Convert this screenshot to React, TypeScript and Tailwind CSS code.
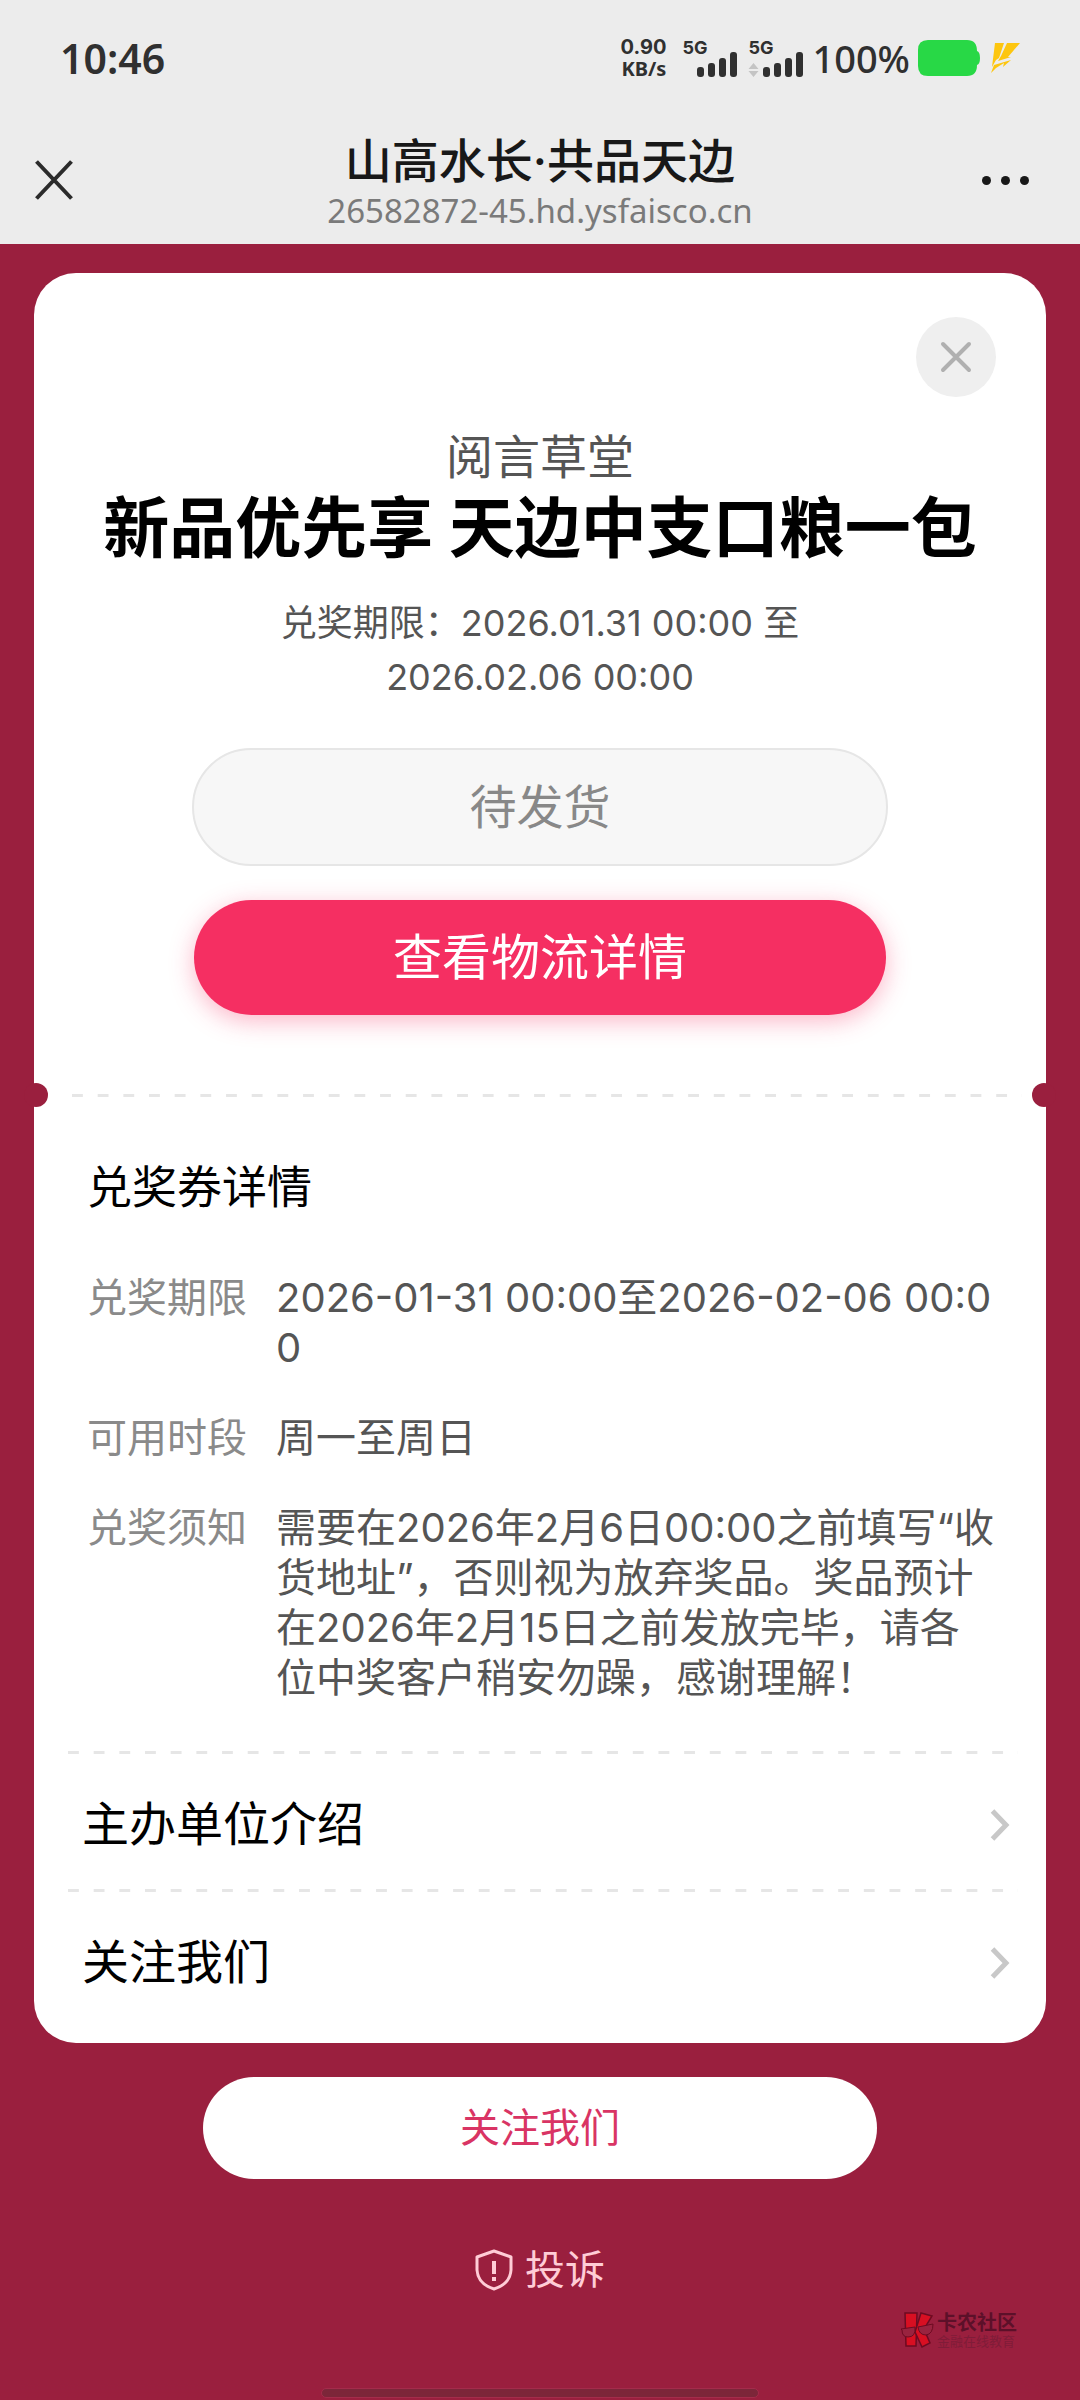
import type { ReactNode } from "react";

const DETAILS = [
  { label: "兑奖期限", value: "2026-01-31 00:00至2026-02-06 00:00" },
  { label: "可用时段", value: "周一至周日" },
  {
    label: "兑奖须知",
    value:
      "需要在2026年2月6日00:00之前填写“收货地址”，否则视为放弃奖品。奖品预计在2026年2月15日之前发放完毕，请各位中奖客户稍安勿躁，感谢理解！",
  },
];

const LINKS = ["主办单位介绍", "关注我们"];

function Signal({ children }: { children?: ReactNode }) {
  return (
    <div className="flex items-end">
      <div className="flex h-[38px] w-6 flex-col justify-between">
        <span className="text-[18px] leading-[18px] font-bold">5G</span>
        {children}
      </div>
      <svg className="-ml-[9px]" width="41" height="38" viewBox="0 0 41 38" fill="#303030" aria-hidden="true">
        <rect x="0" y="28" width="7" height="10" rx="3" />
        <rect x="11" y="24" width="7" height="14" rx="3" />
        <rect x="22" y="19" width="7" height="19" rx="3" />
        <rect x="33" y="13" width="7" height="25" rx="3" />
      </svg>
    </div>
  );
}

function StatusBar() {
  return (
    <div className="flex h-[116px] items-center justify-between px-[60px] text-[#303030]">
      <span className="font-['Noto_Sans'] text-[41px] leading-[50px] font-semibold">10:46</span>
      <div className="flex items-center">
        <div className="mr-4 text-right text-[20px] leading-[22px] font-bold">
          <div>0.90</div>
          <div className="font-['Noto_Sans']">KB/s</div>
        </div>
        <div className="mr-2 flex gap-2.5">
          <Signal />
          <Signal>
            <svg width="11" height="14" viewBox="0 0 11 14" fill="#c4c4c4" aria-hidden="true">
              <path d="M5.5 0 10.5 6H.5ZM5.5 14 10.5 8H.5Z" />
            </svg>
          </Signal>
        </div>
        <span className="mr-[7px] font-['Noto_Sans'] text-[38px] leading-[50px] font-medium">100%</span>
        <svg className="mr-2.5" width="64" height="38" viewBox="0 0 64 38" fill="#28d846" aria-hidden="true">
          <path d="M11 1H50Q60 1 60 12Q63 13 63 19T60 26Q60 37 50 37H11Q1 37 1 27V11Q1 1 11 1Z" />
        </svg>
        <svg width="29" height="30" viewBox="0 0 29 30" fill="#fdc60f" aria-hidden="true">
          <path d="M4 0H13L8 15L5 17L1 24Z" />
          <path d="M16 0H29L17 14H20L7 18L10 13Z" />
          <path d="M20 17 12 24 13 20 5 25 0 30 3 22Z" />
        </svg>
      </div>
    </div>
  );
}

function NavBar() {
  return (
    <div className="flex h-[128px] items-center justify-between px-[35px]">
      <button type="button" aria-label="关闭" className="w-[64px]">
        <svg width="38" height="40" viewBox="0 0 38 40" stroke="#2b2b2b" strokeWidth="4" aria-hidden="true">
          <path d="M1.500 1.500 36.500 38.500M36.500 1.500 1.500 38.500" />
        </svg>
      </button>
      <div className="pt-1 text-center">
        <h1 className="text-[47px] leading-[58px] font-medium text-[#181818]">山高水长·共品天边</h1>
        <p className="font-['Noto_Sans'] text-[33px] leading-[42px] text-[#7a7a7a]">26582872-45.hd.ysfaisco.cn</p>
      </div>
      <button type="button" aria-label="更多" className="flex w-[64px] justify-end gap-[10px] pr-4">
        <span className="size-[9px] shrink-0 rounded-full bg-[#181818]" />
        <span className="size-[9px] shrink-0 rounded-full bg-[#181818]" />
        <span className="size-[9px] shrink-0 rounded-full bg-[#181818]" />
      </button>
    </div>
  );
}

function Dashes() {
  return (
    <div className="h-[3px] bg-[linear-gradient(to_right,#e6e6e6_11px,transparent_11px)] bg-[length:26px_3px] bg-repeat-round" />
  );
}

function Watermark() {
  return (
    <div className="mr-[63px] flex items-center gap-[3px] self-end">
      <svg width="34" height="36" viewBox="0 0 34 36" aria-hidden="true">
        <g fill="#d80f22" stroke="#6d0b22" strokeWidth="1.500">
          <path d="M5 1H17L16 34H6Z" />
          <path d="M21 1 32 4 24 17 30 31 22 35 15 20Z" />
        </g>
        <g fill="#99233f" stroke="#6d0b22" strokeWidth="1">
          <path d="M1 17 15 15Q16 25 8 25 2 25 2 18Z" />
          <path d="M18 15 33 12Q33 22 26 23 19 23 18 15Z" />
        </g>
      </svg>
      <div>
        <div className="text-[20px] leading-[22px] font-bold text-[#5c1029]">卡农社区</div>
        <div className="text-[13px] leading-[14px] text-[#7f1c38]">金融在线教育</div>
      </div>
    </div>
  );
}

export default function App() {
  return (
    <div className="flex min-h-screen flex-col bg-[#9a1f3e] font-[Inter,'Noto_Sans_CJK_SC',sans-serif]">
      <header className="bg-[#ececec]">
        <StatusBar />
        <NavBar />
      </header>

      <main className="flex flex-col items-center px-[34px] pt-[29px]">
        <div className="w-full rounded-[42px] bg-white pt-11 pb-2.5">
          {/* Prize summary */}
          <section className="flex flex-col items-center">
            <button
              type="button"
              aria-label="关闭弹窗"
              className="mr-[50px] flex size-20 items-center justify-center self-end rounded-full bg-[#efefef]"
            >
              <svg width="32" height="32" viewBox="0 0 32 32" stroke="#b0b0b0" strokeWidth="4" strokeLinecap="round" aria-hidden="true">
                <path d="M3 3 29 29M29 3 3 29" />
              </svg>
            </button>
            <p className="mt-[30px] text-[47px] leading-[60px] text-[#555555]">阅言草堂</p>
            <h2 className="text-[66px] leading-[82px] font-bold text-black">新品优先享 天边中支口粮一包</h2>
            <p className="mt-[27px] w-[560px] text-center text-[36px] leading-[54px] text-[#555555]">
              兑奖期限：2026.01.31 00:00 至 2026.02.06 00:00
            </p>
            <button
              type="button"
              disabled
              className="mt-11 h-[118px] w-[696px] max-w-full rounded-full border-2 border-[#e6e6e6] bg-[#f7f7f7] text-[47px] text-[#888888]"
            >
              待发货
            </button>
            <button
              type="button"
              className="mt-[34px] h-[115px] w-[692px] max-w-full rounded-full bg-[#f52f62] text-[49px] text-white shadow-[0_6px_24px_rgba(245,47,98,0.35)]"
            >
              查看物流详情
            </button>
          </section>

          {/* Ticket perforation */}
          <div className="-mx-[10px] mt-[68px] flex items-center">
            <span className="size-6 rounded-full bg-[#9a1f3e]" />
            <div className="mr-[10px] ml-6 grow">
              <Dashes />
            </div>
            <span className="size-6 rounded-full bg-[#9a1f3e]" />
          </div>

          {/* Coupon details */}
          <section className="mt-[51px] pr-12 pl-[53px]">
            <h3 className="text-[45px] leading-[60px] text-black">兑奖券详情</h3>
            <dl className="mt-[55px] flex flex-col gap-10 text-[40px] leading-[50px]">
              {DETAILS.map((d) => (
                <div key={d.label} className="flex gap-[29px]">
                  <dt className="shrink-0 text-[#8a8a8a]">{d.label}</dt>
                  <dd className="break-all text-[#555555]">{d.value}</dd>
                </div>
              ))}
            </dl>
          </section>

          <nav className="mt-12 pr-7 pl-[34px]">
            {LINKS.map((text) => (
              <div key={text}>
                <Dashes />
                <a href="#" className="flex h-[135px] items-center justify-between pt-1.5 pr-2 pl-3.5 text-[47px] text-black">
                  {text}
                  <svg width="20" height="32" viewBox="0 0 20 32" fill="none" stroke="#c8c8c8" strokeWidth="5" aria-hidden="true">
                    <path d="M2.500 2 16 16 2.500 30" />
                  </svg>
                </a>
              </div>
            ))}
            <div className="h-1.5" />
          </nav>
        </div>

        <button
          type="button"
          className="mt-[34px] h-[102px] w-[674px] max-w-full rounded-full bg-white text-[40px] text-[#d93464]"
        >
          关注我们
        </button>

        <a href="#" className="mt-[66px] flex items-center gap-3 text-[40px] leading-[50px] text-[#ffccd6]">
          <svg width="38" height="42" viewBox="0 0 38 42" fill="none" stroke="#ffccd6" strokeWidth="3" strokeLinejoin="round" aria-hidden="true">
            <path d="M19 2 36 8V21Q35 35 19 40 3 35 2 21V8Z" />
            <path d="M19 12V25M19 28V32" strokeWidth="4" />
          </svg>
          投诉
        </a>
      </main>

      <footer className="mt-auto flex flex-col items-center pb-0.5">
        <Watermark />
        <div className="mt-10 h-[10px] w-[438px] rounded-full border border-[#a42c4b] bg-[#7c2639]" />
      </footer>
    </div>
  );
}
